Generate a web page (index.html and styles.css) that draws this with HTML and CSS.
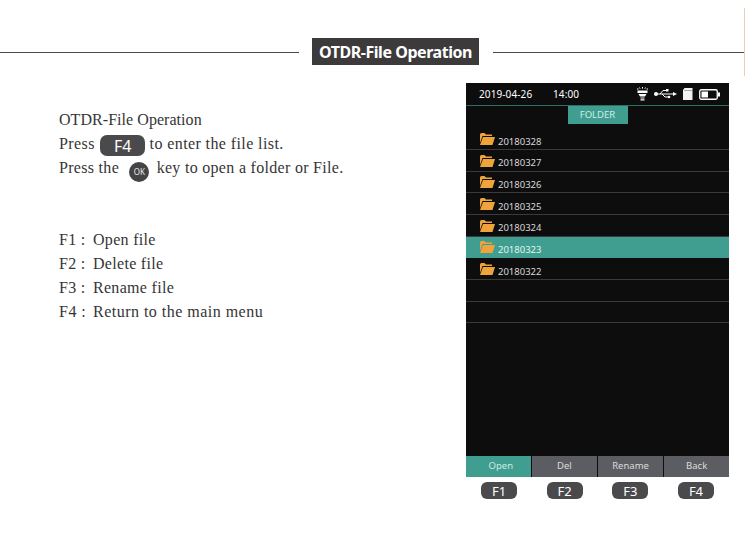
FILE: index.html
```html
<!DOCTYPE html>
<html lang="en">

<head>
  <meta charset="UTF-8">
  <title>OTDR-File Operation</title>
  <link rel="stylesheet" href="styles.css">
</head>

<body>
  <div class="edge"></div>

  <div class="header">
    <div class="rule rule-left"></div>
    <h1 class="badge">OTDR-File Operation</h1>
    <div class="rule rule-right"></div>
  </div>

  <div class="content">
    <div class="manual">
      <div class="intro">
        <p class="title">OTDR-File Operation</p>
        <p class="press">Press <span class="key-wide">F4</span> to enter the file list.</p>
        <p>Press the <span class="key-ok">OK</span> key to open a folder or File.</p>
      </div>
      <div class="keys">
        <p><span class="key-name">F1 :</span>Open file</p>
        <p><span class="key-name">F2 :</span>Delete file</p>
        <p><span class="key-name">F3 :</span>Rename file</p>
        <p class="long"><span class="key-name">F4 :</span>Return to the main menu</p>
      </div>
    </div>

    <div class="device">
      <div class="screen">
        <div class="status">
          <span class="date">2019-04-26</span>
          <span class="time">14:00</span>
          <div class="status-icons">
            <svg width="11" height="14" viewBox="0 0 11 14">
              <path d="M0 2h1.500M2.500 0.500l.6 1.200M5.500 0v1.600M8.500 .5l-.6 1.200M9.500 2H11" stroke="#fff" stroke-width="1"/>
              <path d="M0.500 3.500h10v2.500h-10zM1.500 7h8l-1.500 2.500h-5zM3.500 10.500h4v1h-4zM3.500 12.300h4v1.200h-4z" fill="#fff"/>
            </svg>
            <svg width="23" height="10" viewBox="0 0 23 10">
              <circle cx="2" cy="5" r="2" fill="#fff"/>
              <path d="M3 5h17M6 5l3-3.500h3M8 5l3 3h3" stroke="#fff" stroke-width="1" fill="none"/>
              <path d="M19 3l4 2-4 2z" fill="#fff"/>
              <rect x="12" y="0" width="2.500" height="2.500" fill="#fff"/>
              <circle cx="15" cy="8" r="1.300" fill="#fff"/>
            </svg>
            <svg width="10" height="12" viewBox="0 0 10 12">
              <path d="M1.500 0h8v12h-9.500v-10z" fill="#f2f2f2"/>
              <path d="M1 2.500h9" stroke="#777" stroke-width=".6"/>
            </svg>
            <svg width="21" height="11" viewBox="0 0 21 11">
              <rect x=".75" y=".75" width="17.500" height="9.500" rx="1.500" stroke="#fff" stroke-width="1.300" fill="none"/>
              <rect x="2.500" y="2.500" width="6.500" height="6" fill="#fff"/>
              <rect x="19" y="3.500" width="2" height="4" fill="#fff"/>
            </svg>
          </div>
        </div>

        <div class="folder-tab">FOLDER</div>

        <div class="file-list">
          <div class="file-row">
            <svg class="folder" viewBox="0 0 15 12"><use href="#folder-icon"/></svg>
            <span>20180328</span>
          </div>
          <div class="file-row">
            <svg class="folder" viewBox="0 0 15 12"><use href="#folder-icon"/></svg>
            <span>20180327</span>
          </div>
          <div class="file-row">
            <svg class="folder" viewBox="0 0 15 12"><use href="#folder-icon"/></svg>
            <span>20180326</span>
          </div>
          <div class="file-row">
            <svg class="folder" viewBox="0 0 15 12"><use href="#folder-icon"/></svg>
            <span>20180325</span>
          </div>
          <div class="file-row">
            <svg class="folder" viewBox="0 0 15 12"><use href="#folder-icon"/></svg>
            <span>20180324</span>
          </div>
          <div class="file-row selected">
            <svg class="folder" viewBox="0 0 15 12"><use href="#folder-icon"/></svg>
            <span>20180323</span>
          </div>
          <div class="file-row">
            <svg class="folder" viewBox="0 0 15 12"><use href="#folder-icon"/></svg>
            <span>20180322</span>
          </div>
          <div class="file-row"></div>
          <div class="file-row"></div>
        </div>

        <div class="softkeys">
          <div class="softkey active">Open</div>
          <div class="softkey">Del</div>
          <div class="softkey">Rename</div>
          <div class="softkey">Back</div>
        </div>
      </div>

      <div class="fkeys">
        <span class="fkey">F1</span>
        <span class="fkey">F2</span>
        <span class="fkey">F3</span>
        <span class="fkey">F4</span>
      </div>
    </div>
  </div>

  <svg width="0" height="0" class="defs">
    <symbol id="folder-icon" viewBox="0 0 15 12">
      <path d="M0 1.500q0-1.500 1.500-1.500h3l1.500 1.500h6v1.500h-9.500l-2.500 7z" fill="#eea43a"/>
      <path d="M3 4h12l-2.500 8h-12.500z" fill="#eea43a"/>
    </symbol>
  </svg>
</body>

</html>
```

FILE: styles.css
```css
html,
body {
  margin: 0;
  padding: 0;
}

body {
  position: relative;
  width: 745px;
  height: 540px;
  overflow: hidden;
  background-color: white;
  color: #353535;
  font-family: "Liberation Serif", serif;
}

.edge {
  position: absolute;
  top: 8px;
  right: 0;
  width: 1px;
  height: 68px;
  background-color: #eccdb8;
}

.defs {
  position: absolute;
}

.header {
  display: flex;
  align-items: center;
  gap: 13px;
  padding-top: 38px;
}

.rule {
  flex: 1;
  height: 1px;
  margin-top: 2px;
  background-color: #4a4a4a;
}

.rule-left {
  flex: none;
  width: 299px;
}

.rule-right {
  margin-left: 1px;
}

.badge {
  margin: 0;
  width: 167px;
  height: 27px;
  line-height: 28px;
  text-align: center;
  background-color: #3c3a3b;
  color: white;
  font-family: "Noto Sans", sans-serif;
  font-size: 16px;
  font-weight: 700;
  letter-spacing: -0.45px;
}

.content {
  display: flex;
  justify-content: space-between;
  padding: 18px 16px 0 59px;
}

.manual {
  padding-top: 25px;
  font-size: 16px;
  letter-spacing: 0.3px;
}

.manual p {
  margin: 0;
  height: 24px;
  line-height: 24px;
  white-space: nowrap;
}

.manual .title {
  letter-spacing: 0.05px;
}

.manual .press {
  letter-spacing: 0.4px;
}

.manual .long {
  letter-spacing: 0.48px;
}

.intro {
  margin-bottom: 48px;
}

.key-wide {
  display: inline-block;
  width: 45px;
  height: 21px;
  margin-left: 1px;
  line-height: 23px;
  vertical-align: -3px;
  text-align: center;
  border-radius: 7px;
  background-color: #4a4a4c;
  color: white;
  font-family: "Noto Sans", sans-serif;
  font-size: 16px;
  letter-spacing: 0;
}

.key-ok {
  display: inline-block;
  width: 20px;
  height: 20px;
  margin: 0 3px 0 6px;
  line-height: 20px;
  vertical-align: -2px;
  text-align: center;
  border-radius: 50%;
  background-color: #444446;
  color: #e8e8e8;
  font-family: "Noto Sans", sans-serif;
  font-size: 8px;
  letter-spacing: 0;
}

.key-name {
  display: inline-block;
  width: 34px;
}

.device {
  width: 263px;
}

.screen {
  display: flex;
  flex-direction: column;
  height: 394px;
  background-color: #0d0d0e;
  color: #e6e6e6;
  font-family: "Noto Sans", sans-serif;
}

.status {
  display: flex;
  align-items: center;
  flex: none;
  height: 22px;
  padding: 0 9px 0 13px;
  border-bottom: 1px solid #2c6f62;
  color: white;
  font-size: 10px;
  letter-spacing: 0.1px;
}

.date {
  width: 74px;
}

.status-icons {
  display: flex;
  align-items: center;
  gap: 6px;
  margin-left: auto;
}

.folder-tab {
  flex: none;
  align-self: center;
  width: 60px;
  height: 18px;
  line-height: 18px;
  text-align: center;
  background-color: #3f9e8f;
  color: #d3ece7;
  font-size: 9.500px;
}

.file-list {
  flex: 1;
  padding-top: 4.200px;
}

.file-row {
  display: flex;
  align-items: center;
  gap: 3px;
  box-sizing: border-box;
  height: 21.700px;
  padding-left: 14px;
  border-bottom: 1px solid #3a3a3a;
  color: #d8d8d8;
  font-size: 9.500px;
}

.file-row span {
  padding-top: 5px;
}

.file-row.selected {
  background-color: #3f9e8f;
  border-bottom-color: #3f9e8f;
  color: #e3f3f0;
}

.folder {
  width: 15px;
  height: 12px;
  margin-top: 1px;
}

.softkeys {
  display: grid;
  grid-template-columns: repeat(4, 1fr);
  flex: none;
  gap: 1.500px;
  height: 21px;
}

.softkey {
  box-sizing: border-box;
  line-height: 20px;
  text-align: center;
  background-color: #5c5d63;
  color: #dcdcdc;
  font-size: 9.500px;
}

.softkey.active {
  padding-left: 5px;
  background-color: #3f9e8f;
  color: #cfeae4;
}

.fkeys {
  display: flex;
  justify-content: space-between;
  padding: 5px 15px 0 15px;
}

.fkey {
  width: 36px;
  height: 17px;
  line-height: 18px;
  text-align: center;
  border-radius: 6px;
  background-color: #4a4a4c;
  color: white;
  font-family: "Noto Sans", sans-serif;
  font-size: 13px;
}
```
